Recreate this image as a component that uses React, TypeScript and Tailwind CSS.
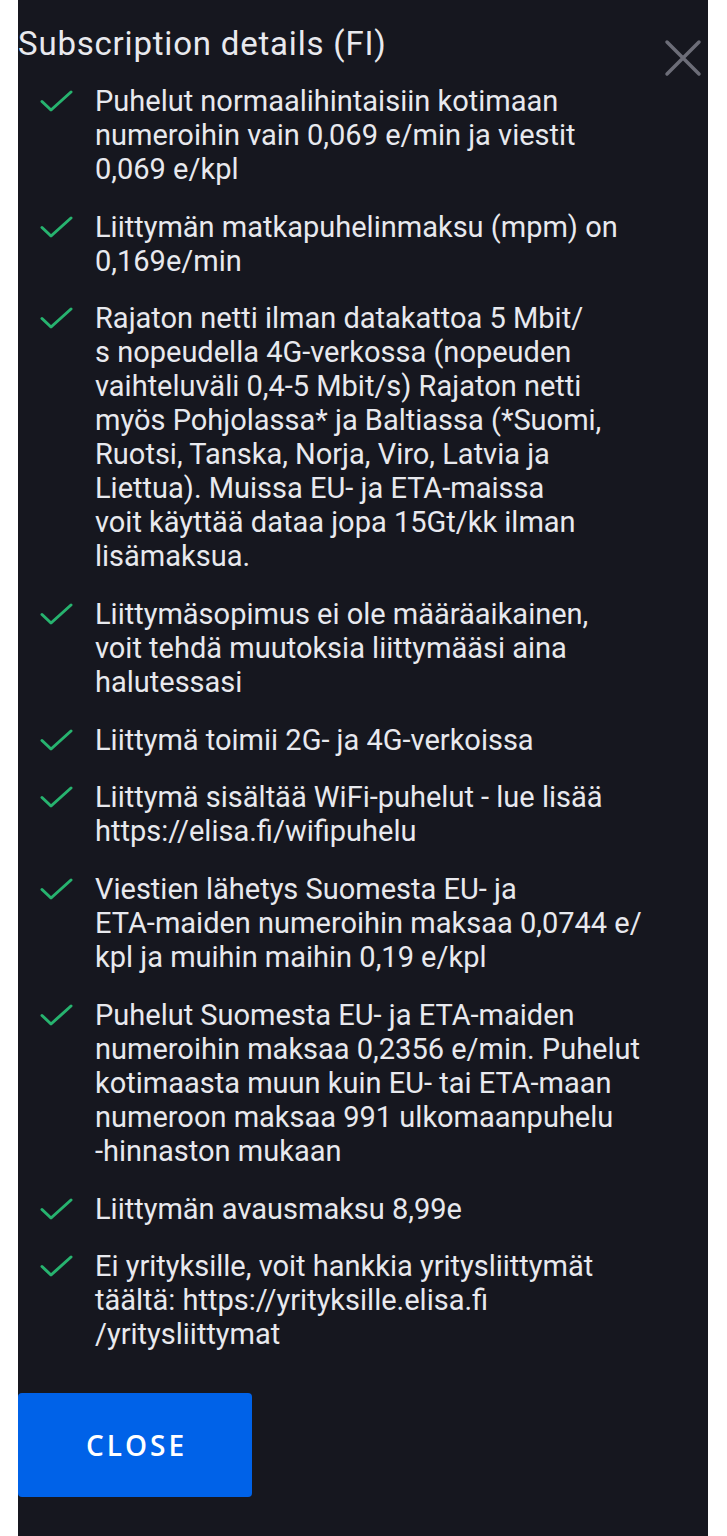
const items: string[][] = [
  [
    "Puhelut normaalihintaisiin kotimaan",
    "numeroihin vain 0,069 e/min ja viestit",
    "0,069 e/kpl",
  ],
  ["Liittymän matkapuhelinmaksu (mpm) on", "0,169e/min"],
  [
    "Rajaton netti ilman datakattoa 5 Mbit/",
    "s nopeudella 4G-verkossa (nopeuden",
    "vaihteluväli 0,4-5 Mbit/s) Rajaton netti",
    "myös Pohjolassa* ja Baltiassa (*Suomi,",
    "Ruotsi, Tanska, Norja, Viro, Latvia ja",
    "Liettua). Muissa EU- ja ETA-maissa",
    "voit käyttää dataa jopa 15Gt/kk ilman",
    "lisämaksua.",
  ],
  [
    "Liittymäsopimus ei ole määräaikainen,",
    "voit tehdä muutoksia liittymääsi aina",
    "halutessasi",
  ],
  ["Liittymä toimii 2G- ja 4G-verkoissa"],
  ["Liittymä sisältää WiFi-puhelut - lue lisää", "https://elisa.fi/wifipuhelu"],
  [
    "Viestien lähetys Suomesta EU- ja",
    "ETA-maiden numeroihin maksaa 0,0744 e/",
    "kpl ja muihin maihin 0,19 e/kpl",
  ],
  [
    "Puhelut Suomesta EU- ja ETA-maiden",
    "numeroihin maksaa 0,2356 e/min. Puhelut",
    "kotimaasta muun kuin EU- tai ETA-maan",
    "numeroon maksaa 991 ulkomaanpuhelu",
    "-hinnaston mukaan",
  ],
  ["Liittymän avausmaksu 8,99e"],
  [
    "Ei yrityksille, voit hankkia yritysliittymät",
    "täältä: https://yrityksille.elisa.fi",
    "/yritysliittymat",
  ],
];

function Check() {
  return (
    <svg width="34" height="34" viewBox="0 0 34 34" fill="none" className="shrink-0">
      <path
        d="M2 17.5 L11 26 L31 8"
        stroke="#27b36f"
        strokeWidth="3"
        strokeLinecap="round"
        strokeLinejoin="round"
      />
    </svg>
  );
}

export default function App() {
  return (
    <div className="min-h-[1536px] w-[727px] bg-white">
      <div className="mx-[18px] flex min-h-[1536px] w-[690px] flex-col bg-[#16171f] pt-[22px] font-['Roboto',sans-serif]">
        <div className="flex items-start justify-between">
          <h1 className="text-[33px] leading-[44px] tracking-[0.8px] text-[#e8e9ee]">Subscription details (FI)</h1>
          <svg width="40" height="40" viewBox="0 0 40 40" className="mr-[5px] mt-[16px]">
            <path d="M4 4 L36 36 M36 4 L4 36" stroke="#6c6d78" strokeWidth="3.5" strokeLinecap="round" />
          </svg>
        </div>

        <ul className="mt-[6px] flex flex-col gap-[23.7px] pl-[22px]">
          {items.map((lines, i) => (
            <li key={i} className="flex items-start gap-[21px]">
              <Check />
              <div className="text-[29px] leading-[34px] text-[#e8e9ee]">
                {lines.map((l, j) => (
                  <div key={j} className="whitespace-nowrap">
                    {l}
                  </div>
                ))}
              </div>
            </li>
          ))}
        </ul>

        <button className="mt-[42px] flex h-[104px] w-[234px] items-center justify-center rounded-[4px] bg-[#0062e8] pl-[3px] font-['Open_Sans',sans-serif] text-[28px] font-semibold tracking-[3px] text-white">
          CLOSE
        </button>
      </div>
    </div>
  );
}
